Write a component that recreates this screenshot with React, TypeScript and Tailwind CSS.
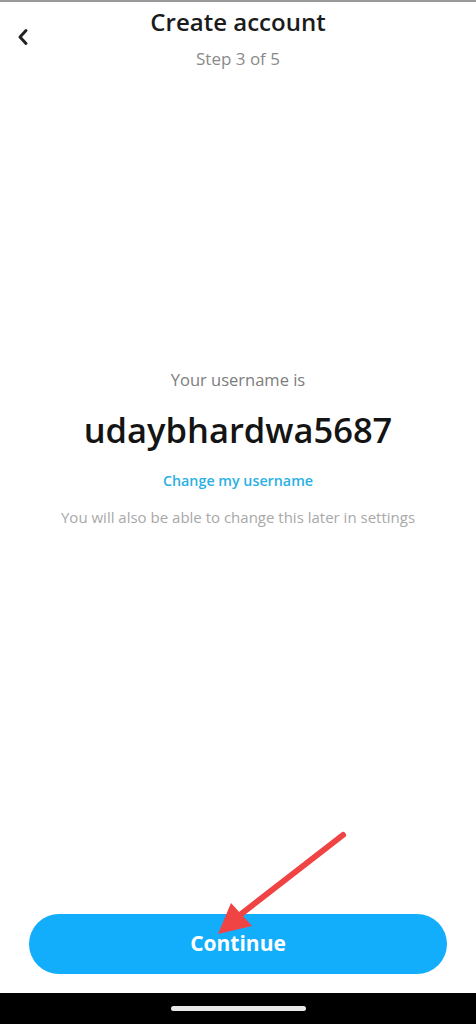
// App.tsx
import React from 'react';

const FONT = { fontFamily: '"Open Sans", Lato, sans-serif' } as const;

const BackChevron: React.FC = () => (
  <svg width="14" height="18" viewBox="0 0 14 18" fill="none">
    <path d="M10 2.5L4 9l6 6.5" stroke="#222" strokeWidth="3" strokeLinecap="round" strokeLinejoin="round" />
  </svg>
);

const PointerArrow: React.FC = () => (
  <svg className="absolute left-0 top-0 pointer-events-none" width="476" height="1024" viewBox="0 0 476 1024">
    <line x1="343" y1="835" x2="236" y2="918" stroke="#f04444" strokeWidth="6" strokeLinecap="round" />
    <polygon points="218,934 231,903 252,926" fill="#f04444" />
  </svg>
);

export default function App() {
  return (
    <div className="relative w-[476px] h-[1024px] bg-white flex flex-col overflow-hidden" style={FONT}>
      <div className="h-[2px] bg-[#9a9a9a]" />

      <header className="relative flex flex-col items-center pt-[6px]">
        <button className="absolute left-[12px] top-[22px] p-1" aria-label="Back">
          <BackChevron />
        </button>
        <h1 className="text-[24px] leading-[28px] font-semibold text-[#1b1b1b]">Create account</h1>
        <p className="mt-[13px] text-[17px] leading-[20px] text-[#8a8a8a]">Step 3 of 5</p>
      </header>

      <main className="flex flex-col items-center text-center">
        <p className="mt-[301px] text-[16.5px] leading-[20px] text-[#7d7d7d]">Your username is</p>
        <p className="mt-[20px] text-[34.5px] leading-[40px] font-semibold text-[#141414]">udaybhardwa5687</p>
        <button className="mt-[21px] text-[14.3px] leading-[20px] font-semibold text-[#2bb0e3]">Change my username</button>
        <p className="mt-[16px] text-[15px] leading-[20px] text-[#a8a8a8]">
          You will also be able to change this later in settings
        </p>
      </main>

      <div className="flex-1" />

      <div className="px-[29px] mb-[19px]">
        <button className="w-full h-[60px] rounded-full bg-[#12adfb] text-white text-[21px] font-bold">
          Continue
        </button>
      </div>

      <div className="h-[31px] bg-black flex items-center justify-center">
        <div className="w-[135px] h-[5px] rounded-full bg-[#e8e8e8]" />
      </div>

      <PointerArrow />
    </div>
  );
}
